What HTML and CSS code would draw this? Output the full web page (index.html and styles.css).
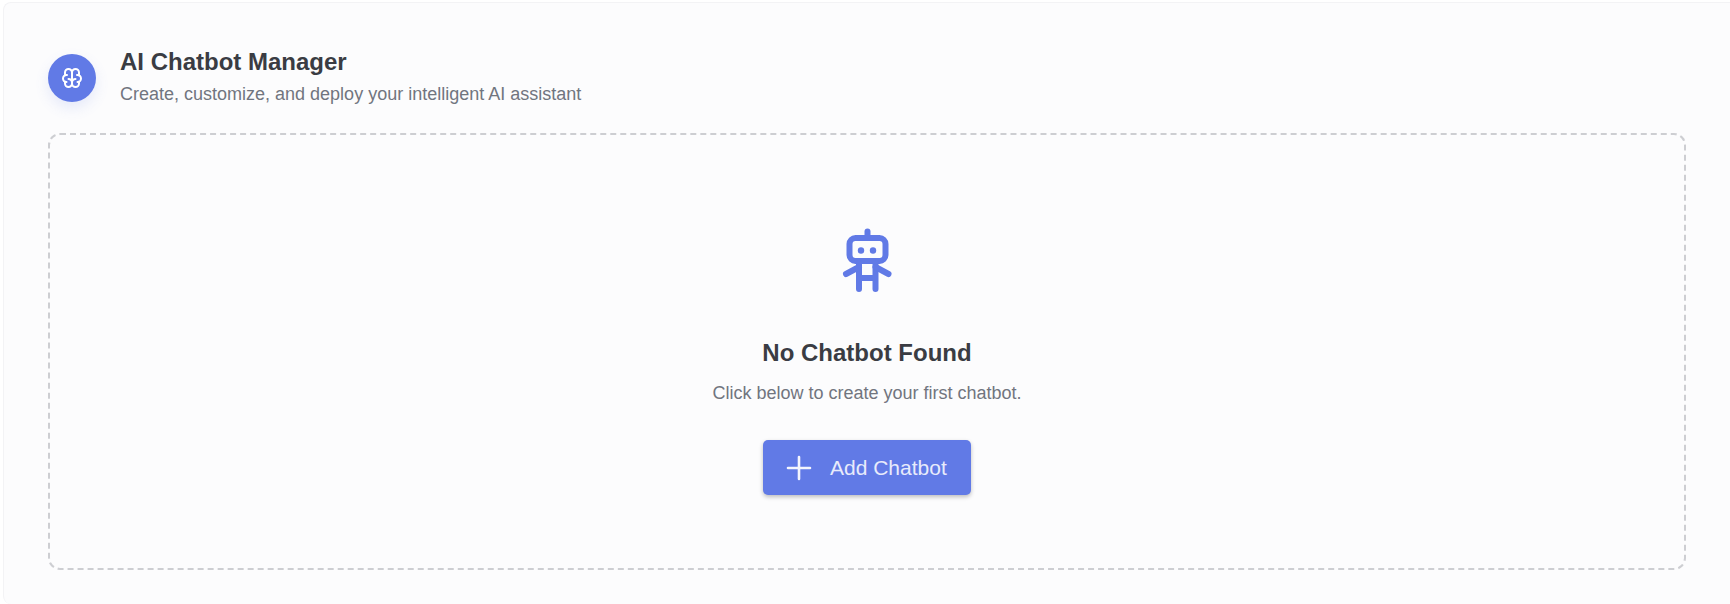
FILE: index.html
```html
<!DOCTYPE html>
<html lang="en">
<head>
  <meta charset="UTF-8">
  <title>AI Chatbot Manager</title>
  <link rel="stylesheet" href="styles.css">
</head>
<body>

  <div class="tarjeta">
    <div class="encabezado">
      <div class="icono-circulo">
        <svg width="24" height="24" viewBox="0 0 24 24" fill="none" stroke="#fff" stroke-width="2" stroke-linecap="round" stroke-linejoin="round">
          <path d="M15.5 13a3.5 3.5 0 0 0 -3.5 3.5v1a3.5 3.5 0 0 0 7 0v-1.8"/>
          <path d="M8.5 13a3.5 3.5 0 0 1 3.5 3.5v1a3.5 3.5 0 0 1 -7 0v-1.8"/>
          <path d="M17.5 16a3.5 3.5 0 0 0 0 -7h-.5"/>
          <path d="M19 9.3v-2.8a3.5 3.5 0 0 0 -7 0"/>
          <path d="M6.5 16a3.5 3.5 0 0 1 0 -7h.5"/>
          <path d="M5 9.3v-2.8a3.5 3.5 0 0 1 7 0v10"/>
        </svg>
      </div>
      <div>
        <h1>AI Chatbot Manager</h1>
        <p>Create, customize, and deploy your intelligent AI assistant</p>
      </div>
    </div>

    <div class="vacio">
      <svg class="robot" width="90" height="85" viewBox="0 0 90 85" fill="none" stroke="#617ae6" stroke-width="6" stroke-linecap="round" stroke-linejoin="round">
        <path d="M47.5 16.5v5"/>
        <rect x="29.5" y="23" width="36" height="23" rx="6"/>
        <circle cx="41" cy="35.5" r="3.2" fill="#617ae6" stroke="none"/>
        <circle cx="53" cy="35.5" r="3.2" fill="#617ae6" stroke="none"/>
        <path d="M39 48v26M55.5 48v26M39 63h16.5"/>
        <path d="M39 52l-13 7M55.5 52l13 7"/>
      </svg>
      <h2>No Chatbot Found</h2>
      <p>Click below to create your first chatbot.</p>
      <button class="btn-agregar">
        <svg width="26" height="26" viewBox="0 0 26 26" fill="none" stroke="#f4f5fd" stroke-width="2.6" stroke-linecap="round">
          <path d="M13 2v22M2 13h22"/>
        </svg>
        Add Chatbot
      </button>
    </div>
  </div>

</body>
</html>
```

FILE: styles.css
```css
body {
  margin: 0;
  height: 604px;
  overflow: hidden;
  background-color: #ffffff;
  font-family: "Liberation Sans", Arial, sans-serif;
}
.tarjeta {
  box-sizing: border-box;
  margin: 2px 0 0 3px;
  padding: 51px 44px 0 44px;
  height: 602px;
  background-color: #fcfcfd;
  border-top: 1px solid #f3f3f5;
  border-left: 1px solid #f3f3f5;
  border-radius: 8px 0 0 8px;
}
.encabezado {
  display: flex;
  align-items: center;
  gap: 24px;
  height: 48px;
  margin-bottom: 31px;
}
.encabezado h1 {
  margin: -4px 0 7px;
  font-size: 24px;
  font-weight: bold;
  line-height: 28px;
  color: #3a3c43;
}
.encabezado p {
  margin: 0;
  font-size: 18px;
  line-height: 22px;
  color: #71757f;
}
.icono-circulo {
  display: flex;
  align-items: center;
  justify-content: center;
  width: 48px;
  height: 48px;
  border-radius: 50%;
  background-color: #617ae6;
  box-shadow: 0 6px 14px rgba(95, 120, 230, 0.14);
}
.vacio {
  display: flex;
  flex-direction: column;
  align-items: center;
  height: 433px;
  border: 2px dashed #cdced2;
  border-radius: 12px;
}
.robot {
  margin-top: 80px;
  margin-right: 4px;
}
.vacio h2 {
  margin: 37px 0 0;
  font-size: 24px;
  font-weight: bold;
  line-height: 32px;
  color: #3a3c43;
}
.vacio p {
  margin: 13px 0 0;
  font-size: 18px;
  line-height: 22px;
  color: #71757f;
}
.btn-agregar {
  display: flex;
  align-items: center;
  gap: 18px;
  width: 208px;
  height: 55px;
  margin-top: 36px;
  padding: 0 0 0 23px;
  border: none;
  border-radius: 5px;
  background-color: #617ae6;
  color: #e8ebfb;
  font-family: inherit;
  font-size: 21px;
  cursor: pointer;
  box-shadow: 0 2px 4px rgba(0, 0, 0, 0.25);
}
```
